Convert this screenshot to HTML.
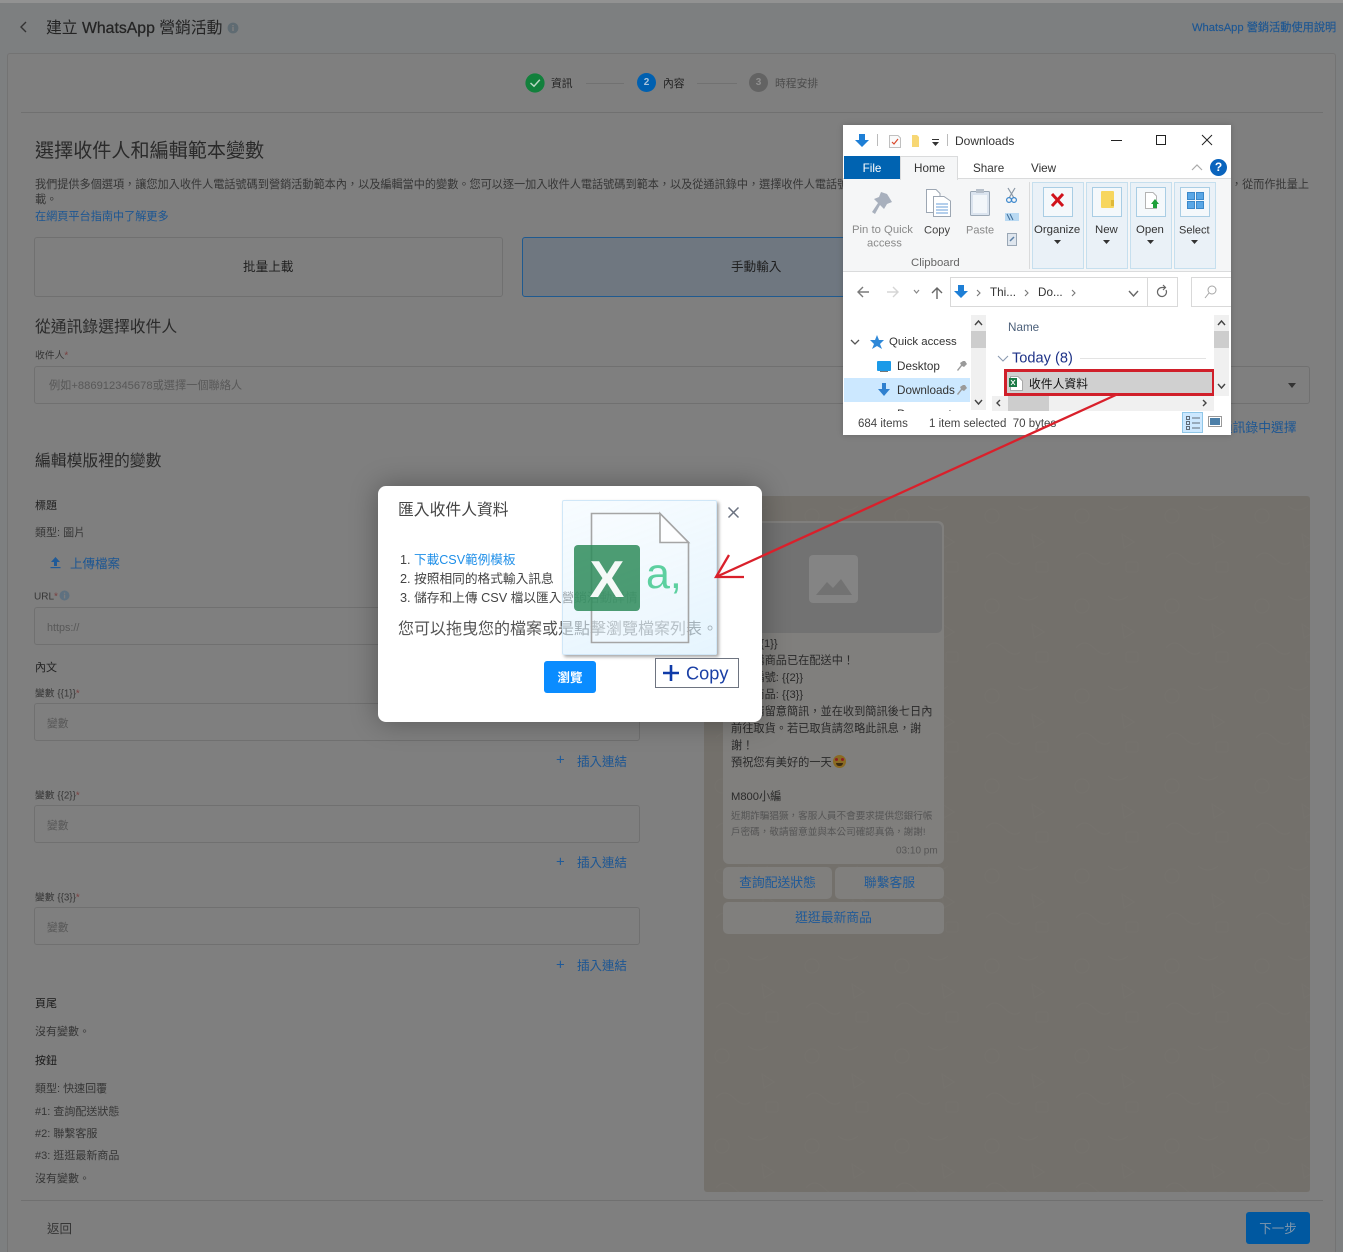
<!DOCTYPE html>
<html lang="zh-Hant">
<head>
<meta charset="utf-8">
<title>建立 WhatsApp 營銷活動</title>
<style>
html,body{margin:0;padding:0;background:#fff;}
#p{position:relative;width:1346px;height:1252px;overflow:hidden;background:#fff;font-family:"Liberation Sans","Noto Sans CJK TC",sans-serif;}
#bg{position:absolute;left:0;top:0;width:1343px;height:1252px;background:#7d7f80;}
.b{position:absolute;box-sizing:border-box;}
.t{position:absolute;white-space:nowrap;transform:translateY(calc(-50% + 2.5px));line-height:1.2;color:#2c2c2c;}
.g{color:#363636}.l{color:#1c5693}.ph{color:#585858}
.inp{position:absolute;box-sizing:border-box;border:1px solid #707070;border-radius:3px;left:34px;width:606px;height:38px;}
.x{position:absolute;white-space:nowrap;transform:translateY(calc(-50% + 2px));line-height:1.2;color:#333;font-family:"Liberation Sans","Noto Sans CJK TC",sans-serif;font-size:11.7px;}
.xg{color:#8a8a8a}
.grp{position:absolute;box-sizing:border-box;top:182px;height:87px;background:#eaf1f7;border:1px solid #c6dfee;}
.ibox{position:absolute;box-sizing:border-box;top:187px;height:30px;width:30px;background:#f4f8fb;border:1px solid #a9cde4;}
</style>
</head>
<body>
<div id="p">
<div id="bg"></div>
<div class="b" style="left:0;top:0;width:1343px;height:3px;background:#929292"></div>

<!-- header -->
<div class="b" style="left:7px;top:53px;width:1329px;height:1199px;background:#7f7f7f;border:1px solid #737373;border-bottom:0;border-radius:3px 3px 0 0"></div>
<svg class="b" style="left:18px;top:20px" width="12" height="14" viewBox="0 0 12 14"><path d="M8 2 L3 7 L8 12" fill="none" stroke="#333" stroke-width="1.4"/></svg>
<div class="t" style="left:46px;top:27px;font-size:15.8px;color:#242424">建立 <span style="-webkit-text-stroke:.25px #242424">WhatsApp</span> 營銷活動</div>
<svg class="b" style="left:227px;top:22px" width="12" height="12"><circle cx="6" cy="6" r="5.4" fill="#5f6b72"/><rect x="5.3" y="5" width="1.4" height="4" fill="#7f7f7f"/><rect x="5.3" y="3" width="1.4" height="1.3" fill="#7f7f7f"/></svg>
<div class="t l" style="left:1192px;top:26px;font-size:11.2px;-webkit-text-stroke:.15px #1c5693">WhatsApp 營銷活動使用說明</div>

<!-- stepper -->
<svg class="b" style="left:524px;top:72px" width="22" height="22"><circle cx="11" cy="11" r="9.6" fill="#12803c"/><path d="M6.5 11 L10 14.2 L15.8 7.8" fill="none" stroke="#b9d8c4" stroke-width="1.5"/></svg>
<div class="t" style="left:551px;top:82px;font-size:10.8px;color:#222">資訊</div>
<div class="b" style="left:586px;top:83px;width:38px;height:1px;background:#717171"></div>
<div class="b" style="left:637px;top:73px;width:19px;height:19px;border-radius:50%;background:#0060b0;color:#a9c4dd;font-size:10px;font-weight:bold;text-align:center;line-height:19px">2</div>
<div class="t" style="left:663px;top:82px;font-size:10.8px;color:#222">內容</div>
<div class="b" style="left:697px;top:83px;width:40px;height:1px;background:#717171"></div>
<div class="b" style="left:749px;top:73px;width:19px;height:19px;border-radius:50%;background:#636363;color:#8f8f8f;font-size:10px;font-weight:bold;text-align:center;line-height:19px">3</div>
<div class="t" style="left:775px;top:82px;font-size:10.8px;color:#4c4c4c">時程安排</div>
<div class="b" style="left:21px;top:112px;width:1302px;height:1px;background:#707070"></div>

<!-- intro -->
<div class="t" style="left:35px;top:150px;font-size:19.1px;color:#2a2a2a">選擇收件人和編輯範本變數</div>
<div class="t g" style="left:35px;top:183px;font-size:11.15px">我們提供多個選項，讓您加入收件人電話號碼到營銷活動範本內，以及編輯當中的變數。您可以逐一加入收件人電話號碼到範本，以及從通訊錄中，選擇收件人電話號碼</div>
<div class="t g" style="left:1231px;top:183px;font-size:11.15px">，從而作批量上</div>
<div class="t g" style="left:35px;top:198px;font-size:11.15px">載。</div>
<div class="t l" style="left:35px;top:215px;font-size:11.15px">在網頁平台指南中了解更多</div>

<div class="b" style="left:34px;top:237px;width:469px;height:60px;border:1px solid #707070;border-radius:3px"></div>
<div class="t" style="left:243px;top:265px;font-size:12.6px;color:#1e1e1e">批量上載</div>
<div class="b" style="left:522px;top:237px;width:480px;height:60px;border:1px solid #1f5a90;border-radius:3px;background:#6f7780"></div>
<div class="t" style="left:731px;top:265px;font-size:12.6px;color:#1e1e1e">手動輸入</div>

<div class="t" style="left:35px;top:326px;font-size:15.8px;color:#2a2a2a">從通訊錄選擇收件人</div>
<div class="t g" style="left:35px;top:354px;font-size:9.8px">收件人<span style="color:#7a3f3f">*</span></div>
<div class="inp" style="top:366px;width:1276px"></div>
<div class="t ph" style="left:49px;top:384px;font-size:11.2px">例如+886912345678或選擇一個聯絡人</div>
<div class="b" style="left:1288px;top:383px;width:0;height:0;border-left:4.5px solid transparent;border-right:4.5px solid transparent;border-top:5px solid #333"></div>
<div class="t l" style="left:1207px;top:425px;font-size:12.8px">從通訊錄中選擇</div>

<!-- template vars -->
<div class="t" style="left:35px;top:460px;font-size:15.8px;color:#2a2a2a">編輯模版裡的變數</div>
<div class="t" style="left:35px;top:504px;font-size:11px;color:#222">標題</div>
<div class="t g" style="left:35px;top:531px;font-size:11px">類型: 圖片</div>
<svg class="b" style="left:49px;top:556px" width="13" height="13"><path d="M6.5 1 L11 6 H8 V10 H5 V6 H2 Z" fill="#1f5a98"/><rect x="1.5" y="11" width="10" height="1.2" fill="#1f5a98"/></svg>
<div class="t l" style="left:70px;top:562px;font-size:12.5px">上傳檔案</div>
<div class="t g" style="left:34px;top:595px;font-size:10px">URL<span style="color:#7a3f3f">*</span></div>
<svg class="b" style="left:59px;top:590px" width="11" height="11"><circle cx="5.5" cy="5.5" r="5" fill="#5f7180"/><rect x="4.9" y="4.6" width="1.3" height="3.8" fill="#7f7f7f"/><rect x="4.9" y="2.6" width="1.3" height="1.2" fill="#7f7f7f"/></svg>
<div class="inp" style="top:607px"></div>
<div class="t ph" style="left:47px;top:626px;font-size:10.8px">https://</div>
<div class="t" style="left:35px;top:666px;font-size:11px;color:#222">內文</div>

<div class="t g" style="left:35px;top:692px;font-size:9.8px">變數 {{1}}<span style="color:#7a3f3f">*</span></div>
<div class="inp" style="top:703px"></div>
<div class="t ph" style="left:47px;top:722px;font-size:10.8px">變數</div>
<div class="t" style="left:556px;top:758px;font-size:15px;color:#1f5a98">+</div>
<div class="t l" style="left:577px;top:760px;font-size:12.5px">插入連結</div>

<div class="t g" style="left:35px;top:794px;font-size:9.8px">變數 {{2}}<span style="color:#7a3f3f">*</span></div>
<div class="inp" style="top:805px"></div>
<div class="t ph" style="left:47px;top:824px;font-size:10.8px">變數</div>
<div class="t" style="left:556px;top:860px;font-size:15px;color:#1f5a98">+</div>
<div class="t l" style="left:577px;top:861px;font-size:12.5px">插入連結</div>

<div class="t g" style="left:35px;top:896px;font-size:9.8px">變數 {{3}}<span style="color:#7a3f3f">*</span></div>
<div class="inp" style="top:907px"></div>
<div class="t ph" style="left:47px;top:926px;font-size:10.8px">變數</div>
<div class="t" style="left:556px;top:963px;font-size:15px;color:#1f5a98">+</div>
<div class="t l" style="left:577px;top:964px;font-size:12.5px">插入連結</div>

<div class="t" style="left:35px;top:1002px;font-size:11px;color:#1a1a1a">頁尾</div>
<div class="t g" style="left:35px;top:1030px;font-size:11px">沒有變數。</div>
<div class="t" style="left:35px;top:1059px;font-size:11px;color:#1a1a1a">按鈕</div>
<div class="t g" style="left:35px;top:1087px;font-size:11px">類型: 快速回覆</div>
<div class="t g" style="left:35px;top:1110px;font-size:11px">#1: 查詢配送狀態</div>
<div class="t g" style="left:35px;top:1132px;font-size:11px">#2: 聯繫客服</div>
<div class="t g" style="left:35px;top:1154px;font-size:11px">#3: 逛逛最新商品</div>
<div class="t g" style="left:35px;top:1177px;font-size:11px">沒有變數。</div>

<div class="b" style="left:21px;top:1200px;width:1302px;height:1px;background:#707070"></div>
<div class="t" style="left:47px;top:1227px;font-size:12.5px;color:#363636">返回</div>
<div class="b" style="left:1246px;top:1212px;width:64px;height:32px;border-radius:3px;background:#0058a0;color:#8298ad;font-size:12.5px;text-align:center;line-height:34px">下一步</div>

<!-- preview -->
<div class="b" style="left:704px;top:496px;width:606px;height:696px;border-radius:3px;background:#73706b"></div>
<svg class="b" style="left:704px;top:496px" width="606" height="696">
<defs><pattern id="w" width="90" height="90" patternUnits="userSpaceOnUse"><g fill="none" stroke="#7b7873" stroke-width="1"><circle cx="18" cy="20" r="7"/><path d="M44 10 q10 8 20 0 M58 38 l12 8 l-10 6z M12 62 q8-10 18 0 t16 4"/><rect x="62" y="66" width="12" height="10" rx="2"/></g></pattern></defs>
<rect width="606" height="696" fill="url(#w)" opacity=".3"/></svg>
<div class="b" style="left:723px;top:521px;width:221px;height:343px;border-radius:6px;background:#807f7d"></div>
<div class="b" style="left:726px;top:523px;width:216px;height:110px;border-radius:5px;background:#727272"></div>
<svg class="b" style="left:809px;top:555px" width="49" height="48"><rect width="49" height="48" rx="4" fill="#848484"/><path d="M7 40 L18 27 L24 33 L32 24 L43 40 Z" fill="#727272"/></svg>
<div class="b" style="left:731px;top:636px;width:210px;font-size:11.2px;line-height:17px;color:#2a2a2a;white-space:nowrap">
您好 {{1}}<br>您訂購商品已在配送中！<br>訂單編號: {{2}}<br>訂單商品: {{3}}<br>另外請留意簡訊，並在收到簡訊後七日內<br>前往取貨。若已取貨請忽略此訊息，謝<br>謝！<br>預祝您有美好的一天<span style="display:inline-block;width:13px;height:13px;border-radius:50%;background:#8a6a22;vertical-align:-2px;position:relative;margin-left:1px"><span style="position:absolute;left:2px;top:3px;width:3px;height:3px;background:#8c2020;border-radius:50%"></span><span style="position:absolute;right:2px;top:3px;width:3px;height:3px;background:#8c2020;border-radius:50%"></span><span style="position:absolute;left:3px;top:8px;width:7px;height:3px;background:#3a2a10;border-radius:0 0 4px 4px"></span></span><br><br>M800小編</div>
<div class="b" style="left:731px;top:807px;width:210px;font-size:9.6px;line-height:16.3px;color:#555;white-space:nowrap;padding-top:2px">近期詐騙猖獗，客服人員不會要求提供您銀行帳<br>戶密碼，敬請留意並與本公司確認真偽，謝謝!</div>
<div class="t" style="left:896px;top:849px;font-size:10px;color:#565656">03:10 pm</div>
<div class="b" style="left:723px;top:867px;width:109px;height:32px;border-radius:5px;background:#807f7d;color:#1f5a98;font-size:12.8px;text-align:center;line-height:32px">查詢配送狀態</div>
<div class="b" style="left:835px;top:867px;width:109px;height:32px;border-radius:5px;background:#807f7d;color:#1f5a98;font-size:12.8px;text-align:center;line-height:32px">聯繫客服</div>
<div class="b" style="left:723px;top:902px;width:221px;height:32px;border-radius:5px;background:#807f7d;color:#1f5a98;font-size:12.8px;text-align:center;line-height:31px">逛逛最新商品</div>

<!-- modal -->
<div class="b" style="left:378px;top:486px;width:384px;height:236px;border-radius:8px;background:#fff;box-shadow:0 0 28px rgba(0,0,0,.32)"></div>
<div class="t" style="left:398px;top:509px;font-size:15.8px;color:#444">匯入收件人資料</div>
<div class="t" style="left:400px;top:557.500px;font-size:12.600px;color:#444">1. <span style="color:#1f8fe8">下載CSV範例模板</span></div>
<div class="t" style="left:400px;top:576.500px;font-size:12.700px;color:#444">2. 按照相同的格式輸入訊息</div>
<div class="t" style="left:400px;top:595.500px;font-size:12.700px;color:#444">3. 儲存和上傳 CSV 檔以匯入營銷活動詳情</div>
<div class="t" style="left:398px;top:627px;font-size:16px;color:#555">您可以拖曳您的檔案或是點擊瀏覽檔案列表。</div>
<div class="b" style="left:544px;top:661px;width:52px;height:32px;border-radius:3px;background:#0a8cff;color:#fff;font-size:12.5px;font-weight:bold;text-align:center;line-height:34px">瀏覽</div>
<svg class="b" style="left:726px;top:505px" width="15" height="15"><path d="M2.5 2.5 L12.5 12.5 M12.5 2.5 L2.5 12.5" stroke="#6b7280" stroke-width="1.5" fill="none"/></svg>

<!-- drag ghost -->
<div class="b" style="left:562px;top:500px;width:155px;height:155px;background:linear-gradient(160deg,rgba(240,249,255,.5),rgba(214,238,253,.62));border:1px solid rgba(205,230,247,.9);border-radius:2px;box-shadow:2px 2px 3px rgba(0,0,0,.35)"></div>
<svg class="b" style="left:562px;top:500px" width="155" height="155">
<path d="M29.500 13.500 H98 L126.500 42.500 V142.500 H29.500 Z" fill="rgba(255,255,255,.2)" stroke="#a5a5a5" stroke-width="1.6"/>
<path d="M98 13.500 V42.500 H126.500 Z" fill="rgba(255,255,255,.8)" stroke="#a5a5a5" stroke-width="1.6"/>
<rect x="12" y="45" width="66" height="66" rx="4" fill="#2e8b5a" opacity=".85"/>
<text x="45" y="97" text-anchor="middle" font-family="Liberation Sans,sans-serif" font-size="52" font-weight="bold" fill="#fff" opacity=".95">X</text>
<text x="84" y="88" font-family="Liberation Sans,sans-serif" font-size="43" fill="#5dd0a0">a,</text>
</svg>
<div class="b" style="left:655px;top:658px;width:84px;height:30px;background:#fff;border:1px solid #6e7480"></div>
<svg class="b" style="left:662px;top:664px" width="20" height="18"><path d="M9 1 V17 M1 9 H17" stroke="#0f3ba8" stroke-width="2.6"/></svg>
<div class="t" style="left:686px;top:671.500px;font-size:18.2px;color:#1a3fa5">Copy</div>

<!-- explorer -->
<div class="b" style="left:843px;top:125px;width:388px;height:310px;background:#fff;box-shadow:0 0 6px rgba(0,0,0,.2)"></div>
<div class="b" style="left:877px;top:134px;width:1px;height:12px;background:#bbb"></div>
<div class="b" style="left:947px;top:134px;width:1px;height:12px;background:#bbb"></div>
<div class="x" style="left:955px;top:139px;color:#333;font-size:12px">Downloads</div>
<div class="b" style="left:1111px;top:140px;width:11px;height:1px;background:#222"></div>
<div class="b" style="left:1156px;top:135px;width:10px;height:10px;border:1px solid #222"></div>
<svg class="b" style="left:1201px;top:134px" width="12" height="12"><path d="M1 1 L11 11 M11 1 L1 11" stroke="#222" stroke-width="1"/></svg>

<div class="b" style="left:843px;top:178px;width:388px;height:94px;background:#f5f6f7;border-top:1px solid #dadbdc;border-bottom:1px solid #dadbdc"></div>
<div class="b" style="left:844px;top:156px;width:56px;height:23px;background:#0063b1;color:#fff;font-size:11.7px;text-align:center;line-height:25px">File</div>
<div class="b" style="left:900px;top:156px;width:58px;height:24px;background:#f5f6f7;border:1px solid #dadbdc;border-bottom:0"></div>
<div class="x" style="left:914px;top:166.500px">Home</div>
<div class="x" style="left:973px;top:166.500px">Share</div>
<div class="x" style="left:1031px;top:166.500px">View</div>
<div class="b" style="left:1210px;top:159px;width:17px;height:17px;border-radius:50%;background:#0a64bd;color:#fff;font-size:12px;font-weight:bold;text-align:center;line-height:17px">?</div>

<div class="x xg" style="left:852px;top:229px;font-size:11.3px">Pin to Quick</div>
<div class="x xg" style="left:867px;top:242px;font-size:11.2px">access</div>
<div class="x" style="left:924px;top:229px;font-size:11.2px;color:#444">Copy</div>
<div class="x xg" style="left:966px;top:229px;font-size:11px">Paste</div>
<div class="x" style="left:911px;top:262px;font-size:11.4px;color:#666">Clipboard</div>
<div class="b" style="left:1029px;top:182px;width:1px;height:87px;background:#dadbdc"></div>

<div class="grp" style="left:1032px;width:52px"></div>
<div class="grp" style="left:1086px;width:42px"></div>
<div class="grp" style="left:1130px;width:42px"></div>
<div class="grp" style="left:1174px;width:42px"></div>
<div class="ibox" style="left:1043px"></div>
<div class="ibox" style="left:1092px"></div>
<div class="ibox" style="left:1136px"></div>
<div class="ibox" style="left:1180px"></div>
<div class="x" style="left:1034px;top:229px;font-size:11.4px">Organize</div>
<div class="x" style="left:1095px;top:229px;font-size:11.4px">New</div>
<div class="x" style="left:1136px;top:229px;font-size:11.4px">Open</div>
<div class="x" style="left:1179px;top:229px;font-size:11px">Select</div>

<!-- nav bar -->
<div class="b" style="left:950px;top:277px;width:228px;height:30px;border:1px solid #d9d9d9"></div>
<div class="b" style="left:1147px;top:277px;width:1px;height:30px;background:#d9d9d9"></div>
<div class="b" style="left:1191px;top:277px;width:40px;height:30px;border:1px solid #d9d9d9;border-right:0"></div>
<div class="x" style="left:990px;top:291px">Thi...</div>
<div class="x" style="left:1038px;top:291px">Do...</div>

<!-- nav pane -->
<div class="b" style="left:844px;top:378px;width:126px;height:24px;background:#cce8ff"></div>
<div class="x" style="left:889px;top:341px;font-size:11.4px">Quick access</div>
<div class="x" style="left:897px;top:365px">Desktop</div>
<div class="b" style="left:897px;top:383px;width:58px;height:16px;overflow:hidden"><div style="font-size:11.7px;line-height:16px;color:#333;white-space:nowrap">Downloads</div></div>
<div class="b" style="left:875px;top:406px;width:90px;height:5px;overflow:hidden"><div style="font-size:12px;line-height:16px;color:#333;white-space:nowrap;padding-left:22px">Documents</div></div>
<div class="b" style="left:971px;top:315px;width:15px;height:95px;background:#f0f0f0"></div>
<div class="b" style="left:971px;top:331px;width:15px;height:17px;background:#cdcdcd"></div>

<!-- file pane -->
<div class="x" style="left:1008px;top:326px;color:#4c607a">Name</div>
<div class="x" style="left:1012px;top:357px;font-size:14.6px;color:#1e3287">Today (8)</div>
<div class="b" style="left:1080px;top:358px;width:126px;height:1px;background:#e3e3e3"></div>
<div class="b" style="left:1004px;top:369px;width:211px;height:27px;background:#d0d0d0;border:3px solid #d01f2a"></div>
<div class="x" style="left:1029px;top:381.500px;font-size:11.8px;color:#111">收件人資料</div>
<div class="b" style="left:1214px;top:315px;width:15px;height:81px;background:#f0f0f0"></div>
<div class="b" style="left:1214px;top:331px;width:15px;height:17px;background:#cdcdcd"></div>
<div class="b" style="left:992px;top:396px;width:222px;height:15px;background:#f0f0f0"></div>
<div class="b" style="left:1008px;top:396px;width:41px;height:15px;background:#cdcdcd"></div>

<!-- status -->
<div class="x" style="left:858px;top:423px;color:#444;font-size:11.500px">684 items</div>
<div class="x" style="left:929px;top:423px;color:#444;font-size:11.500px">1 item selected&nbsp; 70 bytes</div>
<div class="b" style="left:1182px;top:412px;width:21px;height:21px;background:#cce8ff;border:1px solid #8fc7e8"></div>

<!-- explorer icons + arrow -->
<svg class="b" style="left:0;top:0" width="1346" height="1252">
<!-- title icons -->
<path d="M859 134 H865 V140 H869 L862 147 L855 140 H859 Z" fill="#1e7fd6"/>
<path d="M889.500 135.500 H898 L900.500 138 V147.500 H889.500 Z" fill="#fafafa" stroke="#c0c0c0"/>
<path d="M892 142 L894 144 L898 139" fill="none" stroke="#d9482b" stroke-width="1.2"/>
<path d="M912 135 H917 L919 137 V147 H912 Z" fill="#f7d774"/>
<rect x="932" y="139" width="7" height="1" fill="#333"/><path d="M932 142 H939 L935.500 146 Z" fill="#333"/>
<path d="M1192 170 L1197 165 L1202 170" fill="none" stroke="#aaa" stroke-width="1.2"/>
<!-- pin -->
<path d="M887 194 L892 202 L887 204 L884 209 L880 205 L875 214 L872 212 L878 203 L874 199 L879 197 L881 192 Z" fill="#a8b0bd"/>
<!-- copy -->
<path d="M926.500 189.500 H936 L940 193.500 V212.500 H926.500 Z" fill="#fff" stroke="#9da7b3"/>
<path d="M933.500 196.500 H944 L950.500 201 V216.500 H933.500 Z" fill="#fff" stroke="#9da7b3"/>
<path d="M936 204 H948 M936 207 H948 M936 210 H948 M936 213 H948" stroke="#6a9fd8"/>
<!-- paste -->
<rect x="970.500" y="191.500" width="19" height="24" rx="1" fill="#dbe4ef" stroke="#9aa7b5"/>
<rect x="973" y="195" width="14" height="18" fill="#f2f6fa"/>
<rect x="976" y="189" width="8" height="4" fill="#b7c0cb"/>
<!-- cut etc -->
<path d="M1008 188 L1014 198 M1015 188 L1009 198" stroke="#8a97a5" stroke-width="1.2"/>
<circle cx="1009" cy="200" r="2.400" fill="none" stroke="#3a86cc" stroke-width="1.2"/><circle cx="1014" cy="200" r="2.400" fill="none" stroke="#3a86cc" stroke-width="1.2"/>
<rect x="1005" y="213" width="14" height="8" fill="#b9d9f2"/><path d="M1007 214 L1010 220 M1010 214 L1013 220" stroke="#3d6d99"/>
<rect x="1007.500" y="233.500" width="9" height="12" fill="#dfe6ee" stroke="#9aa7b5"/><path d="M1010 241 L1014 237" stroke="#5b7fa5" stroke-width="1.500"/>
<!-- organize x -->
<path d="M1052 194 L1063 206 M1063 194 L1052 206" stroke="#d0121b" stroke-width="3"/>
<!-- new folder -->
<rect x="1101" y="191" width="13" height="17" rx="1" fill="#f7d65f"/><rect x="1111" y="200" width="3" height="6" fill="#e0b93a"/>
<!-- open -->
<path d="M1145.500 192.500 H1153 L1156.500 196 V208.500 H1145.500 Z" fill="#fff" stroke="#b3b3b3"/>
<path d="M1155 199 L1159 204 H1157 V208 H1153 V204 H1151 Z" fill="#1ea03a"/>
<!-- select -->
<g fill="#5aa7e6" stroke="#3c88c9"><rect x="1187.500" y="192.500" width="7" height="7"/><rect x="1196.500" y="192.500" width="7" height="7"/><rect x="1187.500" y="201.500" width="7" height="7"/><rect x="1196.500" y="201.500" width="7" height="7"/></g>
<g fill="#333"><path d="M1054 240 H1061 L1057.500 244 Z"/><path d="M1103 240 H1110 L1106.500 244 Z"/><path d="M1147 240 H1154 L1150.500 244 Z"/><path d="M1191 240 H1198 L1194.500 244 Z"/></g>
<!-- nav -->
<path d="M869 292 H858 M863 287 L858 292 L863 297" fill="none" stroke="#7a7a7a" stroke-width="1.400"/>
<path d="M887 292 H898 M893 287 L898 292 L893 297" fill="none" stroke="#d5d5d5" stroke-width="1.400"/>
<path d="M914 290 L916.500 293 L919 290" fill="none" stroke="#888" stroke-width="1.200"/>
<path d="M937 299 V288 M932 293 L937 288 L942 293" fill="none" stroke="#666" stroke-width="1.400"/>
<path d="M958 285 H964 V291 H968 L961 298 L954 291 H958 Z" fill="#1e7fd6"/>
<g fill="none" stroke="#777" stroke-width="1.100"><path d="M977 290 L980 293 L977 296"/><path d="M1025 290 L1028 293 L1025 296"/><path d="M1072 290 L1075 293 L1072 296"/></g>
<path d="M1129 291 L1133.500 296 L1138 291" fill="none" stroke="#666" stroke-width="1.400"/>
<path d="M1166 290 A4.500 4.500 0 1 1 1162 287.500 L1165 287.500 M1163 285 L1165.500 287.500 L1163 290" fill="none" stroke="#666" stroke-width="1.200"/>
<circle cx="1212" cy="290" r="4" fill="none" stroke="#a5a5a5"/><path d="M1209 293 L1205 298" stroke="#a5a5a5"/>
<!-- nav pane icons -->
<path d="M851 340 L855 344 L859 340" fill="none" stroke="#555" stroke-width="1.300"/>
<path d="M877 335 L879 340 L884 340 L880 344 L882 349 L877 346 L872 349 L874 344 L870 340 L875 340 Z" fill="#2f88d8"/>
<rect x="877" y="361" width="14" height="10" rx="1" fill="#1b9ae8"/>
<rect x="880" y="371" width="8" height="1" fill="#777"/>
<path d="M882 383 H886 V389 H890 L884 396 L878 389 H882 Z" fill="#2f80cf"/>
<g fill="#9a9a9a"><path d="M965 361 L967 364 L964 367 L962 366 L958 371 L957 370 L961 365 L960 363 L963 361 Z"/><path d="M965 385 L967 388 L964 391 L962 390 L958 395 L957 394 L961 389 L960 387 L963 385 Z"/></g>
<g fill="none" stroke="#444" stroke-width="1.400"><path d="M975 325 L978.500 321 L982 325"/><path d="M975 400 L978.500 404 L982 400"/><path d="M1218 325 L1221.500 321 L1225 325"/><path d="M1218 384 L1221.500 388 L1225 384"/><path d="M1000 400 L997 403 L1000 406"/><path d="M1203 400 L1206 403 L1203 406"/></g>
<path d="M998 356 L1003 361 L1008 356" fill="none" stroke="#8a9ab0" stroke-width="1.100"/>
<!-- excel file icon -->
<path d="M1010.500 376.500 H1018 L1022.500 381 V390.500 H1010.500 Z" fill="#fff" stroke="#a9a9a9"/>
<rect x="1009" y="378" width="8" height="9" fill="#1a7a45"/>
<path d="M1011 380 L1015 385 M1015 380 L1011 385" stroke="#fff"/>
<!-- status view icons -->
<g fill="none" stroke="#5f6b78"><rect x="1186.500" y="416.500" width="3" height="3"/><rect x="1186.500" y="421.500" width="3" height="3"/><rect x="1186.500" y="426.500" width="3" height="3"/><path d="M1192 418 H1200 M1192 423 H1200 M1192 428 H1200"/></g>
<rect x="1208.500" y="416.500" width="13" height="10" fill="#fff" stroke="#999"/><rect x="1210" y="418" width="10" height="7" fill="#4c7fa8"/>
<!-- red arrow -->
<g fill="none" stroke="#d9202b" stroke-width="2.300"><path d="M1118 394 L716 577"/><path d="M729 555 L716 577 L744 577"/></g>
</svg>
</div>
</body>
</html>
